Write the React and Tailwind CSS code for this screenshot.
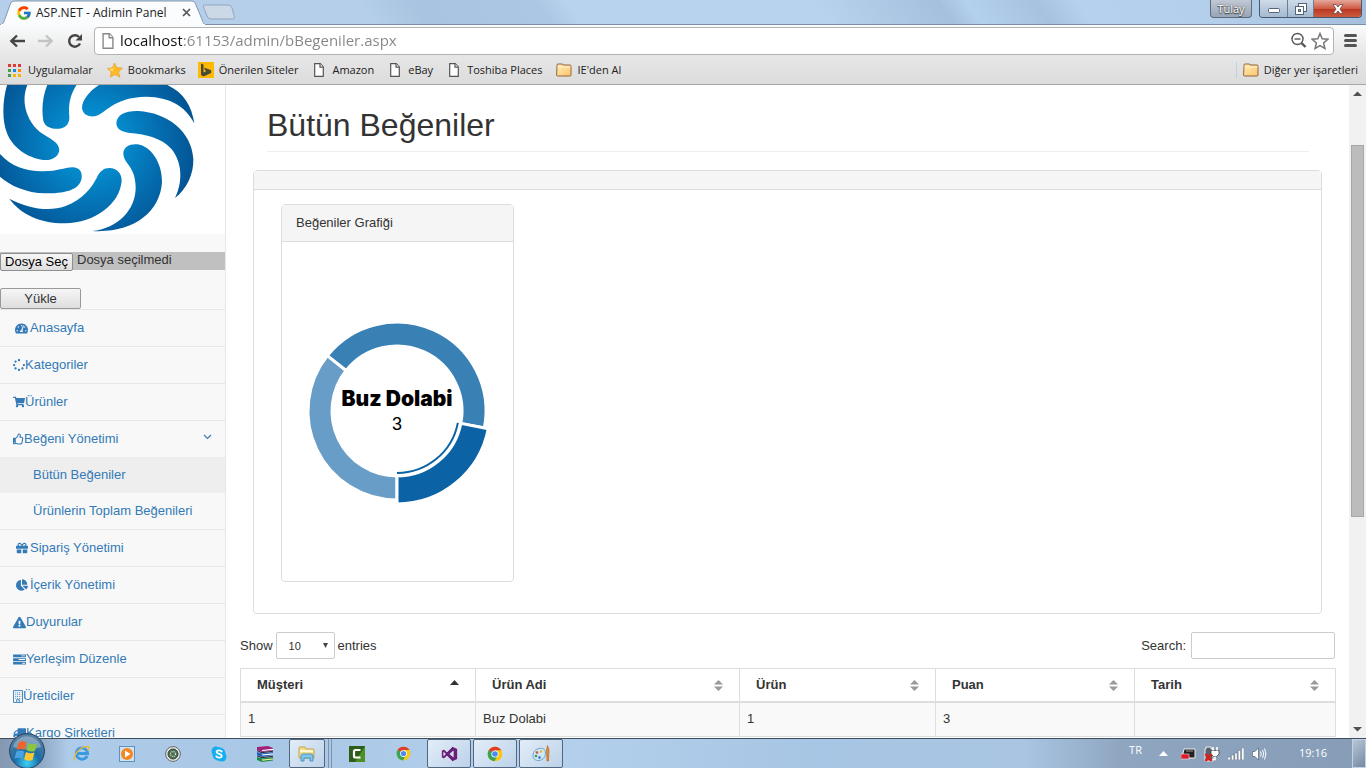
import React from "react";
import {
  FaTachometerAlt,
  FaSpinner,
  FaShoppingCart,
  FaRegThumbsUp,
  FaGift,
  FaChartPie,
  FaExclamationTriangle,
  FaTruck,
} from "react-icons/fa";
import { FcGoogle } from "react-icons/fc";

/* ---------- icons ---------- */

function PageIcon({ className }) {
  return (
    <svg viewBox="0 0 10 14" className={className} fill="#fff" stroke="currentColor" strokeWidth="1.2">
      <path d="M.7.7h5.6L9.3 4v9.3H.7z" />
      <path d="M6 .7V4.200h3.300" />
    </svg>
  );
}

function FolderIcon() {
  return (
    <svg viewBox="0 0 16 14" className="h-3.5 w-4">
      <defs>
        <linearGradient id="folder" x1="0" y1="0" x2="1" y2="1">
          <stop offset="0" stopColor="#ffecb8" />
          <stop offset="1" stopColor="#fbc56c" />
        </linearGradient>
      </defs>
      <path d="M1 3V2Q1 1 2 1h4q1 0 1 1h7q1 0 1 1v9q0 1-1 1H1.500Q.6 13 .6 12z" fill="url(#folder)" stroke="#93653a" />
      <path d="M1.500 4h13" stroke="#fff3d0" />
    </svg>
  );
}

function AppsIcon() {
  const colors = ["#e53935", "#e53935", "#e53935", "#43a047", "#1e88e5", "#fb8c00", "#43a047", "#fbb400", "#fbb400"];
  return (
    <svg viewBox="0 0 13 13" className="size-[13px]">
      {colors.map((c, i) => (
        <rect key={i} x={(i % 3) * 5} y={Math.floor(i / 3) * 5} width="3" height="3" fill={c} />
      ))}
    </svg>
  );
}

function StarIcon() {
  return (
    <svg viewBox="0 0 16 16" className="size-4">
      <path d="M7.500 1l2.200 4.600 5.800.4-4 4 1.500 5.300-5-2.700L3.300 15l.9-5.200L.4 6.500l5-.8z" fill="#fdb927" stroke="#e79a1b" strokeWidth=".6" />
      <path d="M7.500 2.500L6 6.500l-4 .6 3.500 2.400z" fill="#ffe37a" />
    </svg>
  );
}

function BingIcon() {
  return (
    <svg viewBox="0 0 16 16" className="size-4">
      <rect width="16" height="16" fill="#ffb900" />
      <path fillRule="evenodd" d="M3 1.500l2.500 1v8L8.500 9 7 8.300 6 5.500l7.200 2.700v2.900L5.500 14.500 3 13z" fill="#4a4a3c" />
    </svg>
  );
}

function ChromeIcon({ className }) {
  return (
    <svg viewBox="0 0 24 24" className={className}>
      <circle cx="12" cy="12" r="11" fill="#f9c80e" />
      <path d="M2.500 6.500A11 11 0 0 0 11 23l5-8.500-4-2.500z" fill="#3ba455" />
      <path d="M12 12L2.500 6.500A11 11 0 0 1 21.500 6.500H12z" fill="#dc3d2f" />
      <path d="M2.500 6.500L7.300 14.700 12 12z" fill="#3ba455" />
      <circle cx="12" cy="12" r="5.400" fill="#fff" />
      <circle cx="12" cy="12" r="4.200" fill="#4a8af4" />
    </svg>
  );
}

function TasksIcon() {
  return (
    <svg viewBox="0 0 14 12" className="h-[11px] w-[13px]" fill="currentColor">
      <path fillRule="evenodd" d="M0 .5h14v3H0zM9 1.500v1h4v-1zM0 4.500h14v3H0zM6 5.500v1h7v-1zM0 8.500h14v3H0zM10 9.500v1h3v-1z" />
    </svg>
  );
}

function BuildingIcon() {
  return (
    <svg viewBox="0 0 11 14" className="h-[13px] w-2.5" fill="none" stroke="currentColor">
      <path d="M.5.5h10v13h-10zM4 13v-2.500h3V13" />
      <path d="M2.500 3h6.500M2.500 5h6.500M2.500 7h6.500M2.500 9h6.500" strokeDasharray="1 1" />
    </svg>
  );
}

function SwirlLogo() {
  return (
    <svg viewBox="0 3 675 447" className="h-[149px] w-full bg-white" preserveAspectRatio="xMinYMin slice">
      <defs>
        <radialGradient id="swirl" gradientUnits="userSpaceOnUse" cx="275" cy="175" r="330">
          <stop offset="0" stopColor="#0a9ce0" />
          <stop offset=".3" stopColor="#0489cb" />
          <stop offset=".7" stopColor="#0467a9" />
          <stop offset="1" stopColor="#03508f" />
        </radialGradient>
      </defs>
      <g fill="url(#swirl)">
        <path d="M22 0C8 45 5 105 20 145C36 190 82 222 130 228C162 231 181 212 177 192C172 168 135 160 110 135C78 102 62 50 83 0z" />
        <path d="M143 0C128 35 124 75 130 110C135 130 158 136 178 134C198 132 209 118 208 98C204 60 212 28 232 0z" />
        <path d="M302 0C270 18 246 48 246 72C248 92 266 99 284 97C318 90 335 40 440 38C510 40 555 65 583 118C575 65 550 22 495 0z" />
        <path d="M349 118C350 92 376 80 415 81C500 86 575 140 580 225C581 272 560 315 525 342C546 300 550 240 515 196C485 160 430 150 390 147C365 144 350 136 349 118z" />
        <path d="M370 207C371 188 390 179 412 181C452 186 487 235 486 295C480 385 400 448 277 441C350 433 408 380 407 308C406 245 370 240 370 207z" />
        <path d="M28 344C80 372 145 385 195 367C250 346 275 310 290 282C299 261 312 252 328 252C352 253 365 268 365 290C360 360 285 416 195 418C125 419 62 392 28 344z" />
        <path d="M0 210C35 248 80 263 130 262C175 262 190 251 218 250C238 251 247 263 245 282C240 316 200 329 135 328C80 327 30 305 0 278z" />
      </g>
    </svg>
  );
}

/* ---------- browser frame ---------- */

function TabStrip() {
  return (
    <div className="relative flex h-[25px] items-stretch border-b border-[#7c8fa6] bg-[linear-gradient(55deg,#b5cfea_0%,#b5cfea_27%,#a9c4e0_31%,#abc7e3_40%,#b7d3ee_42%,#b7d3ee_60%,#a5c0dc_69%,#b3d0ec_71%,#a7c2de_76%,#b5d1ed_79%,#b3cfeb_88%,#a3bedb_100%)]">
      <div className="relative -mb-px flex w-[206px] items-center pl-4">
        <svg viewBox="0 0 206 25" className="absolute inset-0 size-full" preserveAspectRatio="none">
          <path d="M0 25C4 24 4 21 6 16L10 5C11 2 12 1 15 1H191C194 1 195 2 196 5L201 17C203 22 203 24 206 25z" fill="#fbfcfd" stroke="#8597ad" />
          <path d="M1 25h204" stroke="#fbfcfd" strokeWidth="2" />
        </svg>
        <FcGoogle className="relative size-4" />
        <span className="relative ml-1 flex-1 text-xs text-[#222]">ASP.NET - Adimin Panel</span>
        <button aria-label="Sekmeyi kapat" className="relative mr-[15px]">
          <svg viewBox="0 0 9 9" className="size-[9px]" stroke="#555" strokeWidth="1.700">
            <path d="M1 1l7 7M8 1L1 8" />
          </svg>
        </button>
      </div>
      <button aria-label="Yeni sekme" className="-ml-1 self-center">
        <svg viewBox="0 0 33 16" className="h-4 w-[33px]">
          <path d="M2 1h24q3 0 4 3l2.500 9q0 2-2 2H9q-3 0-4-3L1.500 3q0-2 .5-2z" fill="#cbd8e6" stroke="#93a6bd" />
        </svg>
      </button>
      <div className="ml-auto flex h-[18px] items-stretch pr-1">
        <button className="mr-[7px] w-[42px] rounded-b border border-t-0 border-[#5d6b7c] bg-[linear-gradient(#c0c9d4,#98a5b5)] text-[11px] leading-4 text-white [text-shadow:0_0_2px_#333,0_1px_1px_#333]">
          Tülay
        </button>
        <div className="flex overflow-hidden rounded-b border border-t-0 border-[#46586e]">
          <button aria-label="Küçült" className="flex w-7 items-center justify-center border-r border-[#6c7e95] bg-[linear-gradient(#cfdbe8,#a4b9d0)]">
            <svg viewBox="0 0 12 5" className="mt-1 h-[5px] w-3"><rect x=".5" y=".5" width="11" height="4" rx="1" fill="#fff" stroke="#53637a" /></svg>
          </button>
          <button aria-label="Geri yükle" className="flex w-[26px] items-center justify-center border-r border-[#6c7e95] bg-[linear-gradient(#cfdbe8,#a4b9d0)]">
            <svg viewBox="0 0 12 12" className="size-3" fill="#fff" stroke="#53637a"><rect x="3.500" y=".5" width="8" height="8" /><rect x=".5" y="3.500" width="8" height="8" /><rect x="3.500" y="6.500" width="2" height="2" fill="#9fb3c9" /></svg>
          </button>
          <button aria-label="Kapat" className="flex w-[47px] items-center justify-center bg-[linear-gradient(#e5a99c,#cf5a45_50%,#b93620_51%,#cc5a3e)]">
            <svg viewBox="0 0 12 10" className="h-2.5 w-3"><path d="M1 .5h3l2 2.500 2-2.500h3L8 5l3 4.500H8L6 7 4 9.500H1L4 5z" fill="#fff" stroke="#6b4a4a" strokeWidth=".8" /></svg>
          </button>
        </div>
      </div>
    </div>
  );
}

function Toolbar() {
  return (
    <div className="flex h-[31px] items-center bg-[linear-gradient(#fafbfc,#e6e6e6)] pr-[9px] pl-[9px]">
      <button aria-label="Geri" className="mr-[13px]">
        <svg viewBox="0 0 16 14" className="h-3.5 w-4" fill="none" stroke="#444" strokeWidth="2.400"><path d="M16 7H2.500M8 1.500L2.300 7 8 12.500" /></svg>
      </button>
      <button aria-label="İleri" className="mr-[13px]">
        <svg viewBox="0 0 16 14" className="h-3.5 w-4" fill="none" stroke="#c4c4c4" strokeWidth="2.400"><path d="M0 7h13.500M8 1.500L13.700 7 8 12.500" /></svg>
      </button>
      <button aria-label="Yenile" className="mr-[11px]">
        <svg viewBox="0 0 16 16" className="size-4"><path d="M13 10.500A5.700 5.700 0 1 1 12 4" fill="none" stroke="#444" strokeWidth="2.400" /><path d="M15 1v6.500H8.500z" fill="#444" /></svg>
      </button>
      <div className="flex h-7 flex-1 items-center rounded-sm border border-[#b3b3b3] bg-white pr-1 pl-[7px]">
        <PageIcon className="h-4 w-3 text-[#888]" />
        <input
          aria-label="Adres"
          readOnly
          value="localhost:61153/admin/bBegeniler.aspx"
          className="ml-[6px] min-w-0 flex-1 bg-[linear-gradient(90deg,#111_62px,#858585_62px)] bg-clip-text text-[15px] text-transparent outline-none"
        />
        <button aria-label="Yakınlaştırma" className="mr-1">
          <svg viewBox="0 0 17 17" className="size-[17px]" fill="none" stroke="#555"><circle cx="7.500" cy="7" r="5.500" strokeWidth="1.400" /><path d="M4.500 7h6" strokeWidth="1.400" /><path d="M11.500 11l4 4" strokeWidth="2.400" /></svg>
        </button>
        <button aria-label="Yer işareti ekle">
          <svg viewBox="0 0 18 18" className="size-[18px]" fill="#fff" stroke="#777" strokeWidth="1.500"><path d="M9 1.500l2.200 5.200 5.600.5-4.200 3.700 1.300 5.500L9 13.500l-4.900 2.900 1.300-5.500L1.200 7.200l5.600-.5z" /></svg>
        </button>
      </div>
      <button aria-label="Menü" className="ml-2.5">
        <svg viewBox="0 0 13 13" className="size-[13px]" stroke="#555" strokeWidth="3" strokeLinecap="round"><path d="M1.500 1.500h10M1.500 6.500h10M1.500 11.500h10" /></svg>
      </button>
    </div>
  );
}

function BookmarkBar() {
  const link = "flex items-center whitespace-nowrap text-[#222]";
  const page = "h-3.5 w-2.5 text-[#555]";
  return (
    <nav className="flex h-[29px] items-center border-b border-[#a6a6a6] bg-[linear-gradient(#e6e6e6,#dcdcdc)] pr-2 pl-2 text-[11px]">
      <a href="#apps" className={`${link} mr-3.5 gap-[7px]`}><AppsIcon />Uygulamalar</a>
      <a href="#bookmarks" className={`${link} mr-3 gap-[5px]`}><StarIcon />Bookmarks</a>
      <a href="#onerilen" className={`${link} mr-4 gap-[5px]`}><BingIcon />Önerilen Siteler</a>
      <a href="#amazon" className={`${link} mr-4 gap-2`}><PageIcon className={page} />Amazon</a>
      <a href="#ebay" className={`${link} mr-4 gap-2`}><PageIcon className={page} />eBay</a>
      <a href="#toshiba" className={`${link} mr-3.5 gap-2`}><PageIcon className={page} />Toshiba Places</a>
      <a href="#ie" className={`${link} gap-[5px]`}><FolderIcon />IE'den Al</a>
      <a href="#other" className={`${link} ml-auto gap-[5px] border-l border-[#c3d0dc] pl-1.5`}><FolderIcon />Diğer yer işaretleri</a>
    </nav>
  );
}

function Scrollbar() {
  return (
    <div className="flex w-[17px] shrink-0 flex-col items-center bg-[#f1f1f1]">
      <svg viewBox="0 0 17 17" className="size-[17px]"><path d="M4 11l4.500-4.500L13 11z" fill="#505050" /></svg>
      <div className="relative w-full flex-1">
        <div className="absolute inset-x-0.5 top-[7%] h-[60%] border border-[#a8a8a8] bg-[#bcbcbc]" />
      </div>
      <svg viewBox="0 0 17 17" className="size-[17px]"><path d="M4 6l4.500 4.500L13 6z" fill="#505050" /></svg>
    </div>
  );
}

/* ---------- page ---------- */

const wide = "flex w-[17px] justify-center";

function MenuItem({ icon, children, arrow }) {
  return (
    <a href="#menu" className="flex h-9 items-center px-[13px]">
      {icon}
      {children}
      {arrow && (
        <svg viewBox="0 0 9 6" className="mb-1 ml-auto h-1.5 w-[9px]" fill="none" stroke="currentColor" strokeWidth="1.200">
          <path d="M1 1l3.500 3.500L8 1" />
        </svg>
      )}
    </a>
  );
}

function Sidebar() {
  return (
    <aside className="w-[226px] shrink-0 overflow-hidden border-r border-[#e7e7e7] bg-[#f8f8f8]">
      <SwirlLogo />
      <label className="mt-[18px] flex h-[18px] items-start bg-[#c0c0c0] leading-4">
        <input type="file" className="sr-only" />
        <span className="mt-px flex h-[18px] w-[73px] shrink-0 items-center justify-center rounded-xs border border-[#8f8f8f] bg-[linear-gradient(#f6f6f6,#dedede)] text-black">
          Dosya Seç
        </span>
        <span className="ml-1">Dosya seçilmedi</span>
      </label>
      <button className="mt-[18px] flex h-[21px] w-[81px] items-center justify-center rounded-xs border border-[#999] bg-[linear-gradient(#f6f6f6,#dedede)]">
        Yükle
      </button>
      <ul className="border-t border-[#e7e7e7] text-[#337ab7] [&>li]:border-b [&>li]:border-[#e7e7e7]">
        <li><MenuItem icon={<span className={wide}><FaTachometerAlt className="size-[13px]" /></span>}>Anasayfa</MenuItem></li>
        <li><MenuItem icon={<FaSpinner className="size-3" />}>Kategoriler</MenuItem></li>
        <li><MenuItem icon={<FaShoppingCart className="size-3" />}>Ürünler</MenuItem></li>
        <li>
          <MenuItem icon={<FaRegThumbsUp className="h-3 w-[11px]" />} arrow>Beğeni Yönetimi</MenuItem>
          <ul>
            <li><a href="#butun" className="flex h-9 items-center bg-[#eee] pl-[33px]">Bütün Beğeniler</a></li>
            <li><a href="#toplam" className="flex h-9 items-center pl-[33px]">Ürünlerin Toplam Beğenileri</a></li>
          </ul>
        </li>
        <li><MenuItem icon={<span className={wide}><FaGift className="size-3" /></span>}>Sipariş Yönetimi</MenuItem></li>
        <li><MenuItem icon={<span className={wide}><FaChartPie className="size-3" /></span>}>İçerik Yönetimi</MenuItem></li>
        <li><MenuItem icon={<FaExclamationTriangle className="size-[13px]" />}>Duyurular</MenuItem></li>
        <li><MenuItem icon={<TasksIcon />}>Yerleşim Düzenle</MenuItem></li>
        <li><MenuItem icon={<BuildingIcon />}>Üreticiler</MenuItem></li>
        <li><MenuItem icon={<FaTruck className="size-[13px] -scale-x-100" />}>Kargo Şirketleri</MenuItem></li>
      </ul>
    </aside>
  );
}

function point(radius, degrees) {
  const a = (degrees * Math.PI) / 180;
  return `${(radius * Math.sin(a)).toFixed(2)} ${(-radius * Math.cos(a)).toFixed(2)}`;
}

function slice(inner, outer, from, to) {
  return `M${point(outer, from)}A${outer} ${outer} 0 0 1 ${point(outer, to)}L${point(inner, to)}A${inner} ${inner} 0 0 0 ${point(inner, from)}z`;
}

function Donut() {
  return (
    <svg viewBox="-115 -169 231 339" className="h-[339px] w-full">
      <g stroke="#fff" strokeWidth="3">
        <path d={slice(65, 89, 180, 308.500)} fill="#679dc6" />
        <path d={slice(65, 89, 308.500, 461)} fill="#3980b5" />
        <path d={slice(65, 93, 101, 180)} fill="#0b62a4" />
      </g>
      <path d={`M${point(62, 101)}A62 62 0 0 1 0 62`} fill="none" stroke="#0b62a4" strokeWidth="2" />
      <text y="-5" textAnchor="middle" className="font-[Inter,sans-serif] text-[21px] font-black">Buz Dolabi</text>
      <text y="19" textAnchor="middle" className="text-lg">3</text>
    </svg>
  );
}

function SortIcon({ sorted }) {
  return (
    <svg viewBox="0 0 9 11" className="h-[11px] w-[9px] shrink-0">
      {sorted ? (
        <path d="M0 5l4.500-5L9 5z" fill="#333" />
      ) : (
        <path d="M0 4.500L4.500 0 9 4.500zM0 6.500h9L4.500 11z" fill="#999" />
      )}
    </svg>
  );
}

function Content() {
  const columns = [
    ["Müşteri", "w-[235px]"],
    ["Ürün Adi", "w-[264px]"],
    ["Ürün", "w-[196px]"],
    ["Puan", "w-[199px]"],
    ["Tarih", ""],
  ];
  return (
    <main className="min-w-0 flex-1 overflow-hidden bg-white pr-[13px] pl-[14px]">
      <h1 className="mx-[27px] mt-[22px] border-b border-[#eee] pb-2 text-[32px] leading-9 font-normal">Bütün Beğeniler</h1>
      <section className="mt-[18px] mr-[14px] ml-[13px] rounded border border-[#ddd]">
        <div className="h-[19px] border-b border-[#ddd] bg-[#f5f5f5]" />
        <div className="px-[27px] pt-3.5 pb-[31px]">
          <div className="w-[233px] rounded border border-[#ddd]">
            <h2 className="flex h-[37px] items-center border-b border-[#ddd] bg-[#f5f5f5] px-3.5 font-normal">Beğeniler Grafiği</h2>
            <Donut />
          </div>
        </div>
      </section>
      <div className="mt-[18px] flex items-center justify-between pr-px">
        <label className="flex items-center gap-[3px]">
          Show
          <span className="relative">
            <select className="h-[27px] w-[59px] appearance-none rounded-xs border border-[#ccc] bg-white pl-3 text-[11px] outline-none">
              <option>10</option>
              <option>25</option>
            </select>
            <svg viewBox="0 0 5 5" className="pointer-events-none absolute top-[11px] right-[7px] size-[5px]"><path d="M0 0h5L2.500 5z" fill="#444" /></svg>
          </span>
          entries
        </label>
        <label className="flex items-center gap-[5px]">
          Search:
          <input type="search" className="h-[27px] w-36 rounded-xs border border-[#ccc] bg-white px-2 outline-none" />
        </label>
      </div>
      <table className="mt-[9px] w-full table-fixed border-separate border-spacing-0 border-t border-l border-[#ddd]">
        <thead>
          <tr>
            {columns.map(([name, width], i) => (
              <th key={name} className={`${width} h-[34px] border-r border-b-2 border-[#ddd] px-4 text-left font-bold`}>
                <div className="flex items-center justify-between">
                  {name}
                  <SortIcon sorted={i === 0} />
                </div>
              </th>
            ))}
          </tr>
        </thead>
        <tbody>
          <tr className="bg-[#f9f9f9]">
            {["1", "Buz Dolabi", "1", "3", ""].map((v, i) => (
              <td key={i} className="h-[34px] border-r border-b border-[#ddd] px-[7px] pt-[7px] align-top">{v}</td>
            ))}
          </tr>
        </tbody>
      </table>
    </main>
  );
}

/* ---------- taskbar ---------- */

function StartOrb() {
  return (
    <svg viewBox="0 0 36 36" className="size-9">
      <defs>
        <radialGradient id="orb" cx=".5" cy=".85" r=".8">
          <stop offset="0" stopColor="#3fd0f5" />
          <stop offset=".45" stopColor="#1b6da8" />
          <stop offset="1" stopColor="#5c7f9f" />
        </radialGradient>
      </defs>
      <circle cx="18" cy="18" r="17.400" fill="url(#orb)" stroke="#21425f" />
      <path d="M4 14A14.500 14.500 0 0 1 32 14Q18 19 4 14z" fill="#fff" opacity=".3" />
      <path d="M9.500 9.500q4-2.500 8 0l-1.800 7.500q-4-2-8 0z" fill="#f0652b" />
      <path d="M19 10q4 2.300 9 .5l-2 7.500q-4.500 1.500-8.500-.8z" fill="#8cc63e" />
      <path d="M7.300 18.500q4-2 8 0l-1.900 7.300q-4-2-8 0z" fill="#4aa3e0" />
      <path d="M17 19q4 2.300 8.500.6l-2 7.400q-4.500 1.800-8.300-.7z" fill="#fdc82f" />
    </svg>
  );
}

function IeIcon() {
  return (
    <svg viewBox="0 0 18 18" className="size-[17px]" fill="none">
      <path d="M15 11.500A6 6 0 1 1 15.500 9H5" stroke="#3a9ae0" strokeWidth="3" />
      <path d="M2 16.500C-1 13 6 2 15 1.500c3 .3 1.500 3 .5 4.500" stroke="#f2b92c" strokeWidth="1.500" />
    </svg>
  );
}

function PlayerIcon() {
  return (
    <svg viewBox="0 0 16 16" className="size-4">
      <rect x=".5" y=".5" width="15" height="15" fill="#cfe3f5" stroke="#5b93c2" />
      <circle cx="8" cy="8" r="6" fill="#f6861f" />
      <path d="M6 4.500L11.500 8 6 11.500z" fill="#fff" />
    </svg>
  );
}

function KnobIcon() {
  return (
    <svg viewBox="0 0 16 16" className="size-4">
      <circle cx="8" cy="8" r="7.400" fill="#e4e8e4" stroke="#666" />
      <circle cx="8" cy="8" r="5" fill="#4d7054" stroke="#34463a" />
      <circle cx="8" cy="8" r="2.500" fill="none" stroke="#dcebdc" strokeWidth="1.200" strokeDasharray="1 1" />
    </svg>
  );
}

function SkypeIcon() {
  return (
    <svg viewBox="0 0 16 16" className="size-4">
      <circle cx="5" cy="5" r="4.500" fill="#14aef0" />
      <circle cx="11" cy="11" r="4.500" fill="#14aef0" />
      <circle cx="8" cy="8" r="6.700" fill="#14aef0" />
      <path d="M10.800 5.600C10 4 5.500 3.800 5.500 6c0 2.300 5.300 1.500 5.300 4 0 2.200-4.700 2.200-5.600.2" fill="none" stroke="#fff" strokeWidth="1.700" strokeLinecap="round" />
    </svg>
  );
}

function RarIcon() {
  return (
    <svg viewBox="0 0 16 16" className="size-4">
      <path d="M0 1l11-1 5 2v2.500L5 6 0 4z" fill="#a0207a" />
      <path d="M5 4.500l11-1.200" stroke="#fff" strokeWidth="1.200" />
      <path d="M0 6l5 1.500 11-1.500v3L5 11 0 9z" fill="#2460b4" />
      <path d="M5 9l11-1.200" stroke="#fff" strokeWidth="1.200" />
      <path d="M0 11l5 1.500L16 11v3.500L5 16l-5-2z" fill="#1d8a44" />
      <path d="M5 14.200L16 13" stroke="#f4ef9a" strokeWidth="1.200" />
      <path d="M0 4.700l5 2L16 5.200M0 9.800l5 1.900 11-1.500" fill="none" stroke="#1c1020" strokeWidth=".9" />
    </svg>
  );
}

function ExplorerIcon() {
  return (
    <svg viewBox="0 0 18 16" className="h-4 w-[18px]">
      <path d="M1 2q0-1 1-1h5l1 2h7q1 0 1 1v8H1z" fill="#f3dc8b" stroke="#c6a24b" />
      <path d="M2 5h13" stroke="#fff7cf" strokeWidth="2" />
      <path d="M3 15V10q0-2 2-2h8q2 0 2 2v5h-3v-3H6v3z" fill="#7fc4ea" stroke="#4a93c4" />
    </svg>
  );
}

function CamtasiaIcon() {
  return (
    <svg viewBox="0 0 16 16" className="size-4">
      <path d="M0 0h16v16H0z" fill="#2c5e1a" />
      <path d="M16 0v16H6z" fill="#4c8f22" />
      <path d="M11.500 4H6.500q-1.500 0-1.500 1.500v4.500q0 1.500 1.500 1.500h5" fill="none" stroke="#fff" strokeWidth="2.200" />
    </svg>
  );
}

function StudioIcon() {
  return (
    <svg viewBox="0 0 17 16" className="h-4 w-[17px]">
      <path
        fillRule="evenodd"
        fill="#68217a"
        stroke="#fff"
        strokeWidth=".5"
        d="M.5 4.500L3 3.300 6 6 11.500.5 16.500 2.700V13.300L11.500 15.500 6 10 3 12.700.5 11.500zM2.700 6.300V9.700L4.500 8zM12.300 5L8.800 8l3.500 3z"
      />
    </svg>
  );
}

function PaintIcon() {
  return (
    <svg viewBox="0 0 18 17" className="h-[17px] w-[18px]">
      <path d="M7 3.500c4-1 6.500 1 6.500 4.500 0 5-4 8-8 7.500C2 15 .5 12.500 1 9.500 1.500 6.500 4 4 7 3.500z" fill="#cfe6f5" stroke="#6ca3c9" />
      <circle cx="5" cy="7.500" r="1.300" fill="#d94a3c" />
      <circle cx="9" cy="6.500" r="1.300" fill="#f2b92c" />
      <circle cx="4" cy="11" r="1.300" fill="#3f9b46" />
      <circle cx="7.500" cy="12.500" r="1.300" fill="#356fc4" />
      <path d="M14.500 5l1-4.500L17 5l-.5 11h-1.500z" fill="#ea8a2e" stroke="#a9601c" strokeWidth=".6" />
    </svg>
  );
}

function Taskbar() {
  const plain = "flex w-[46px] items-center justify-center";
  const open = "flex w-11 items-center justify-center rounded-xs border border-[#51677f] bg-[linear-gradient(135deg,#e3edf8,#bcd2e9)]";
  return (
    <footer className="relative flex h-[30px] shrink-0 items-stretch border-t border-[#3d4f5e] bg-[linear-gradient(90deg,#8498b2_0%,#8fa8c4_3%,#aecbe9_5%,#a9c7e6_20%,#b4d0ec_40%,#a7c5e4_60%,#a9c5e2_75%,#8fa6c0_82%,#879db7_100%)]">
      <button aria-label="Başlat" className="absolute bottom-[-1px] left-[9px]"><StartOrb /></button>
      <div className="ml-[58px] flex items-stretch">
        <button aria-label="Internet Explorer" className={plain}><IeIcon /></button>
        <button aria-label="Media Player" className={plain}><PlayerIcon /></button>
        <button aria-label="Ses" className={plain}><KnobIcon /></button>
        <button aria-label="Skype" className={plain}><SkypeIcon /></button>
        <button aria-label="WinRAR" className={plain}><RarIcon /></button>
        <button aria-label="Windows Gezgini" className="ml-px flex w-9 items-center justify-center rounded-xs border border-[#51677f] bg-[linear-gradient(135deg,#e3edf8,#bcd2e9)]"><ExplorerIcon /></button>
        <span className="w-1 border-r border-[#7d93ac]" />
        <span className="mr-0.5 w-[3px] border-r border-[#7d93ac]" />
        <button aria-label="Camtasia" className={plain}><CamtasiaIcon /></button>
        <button aria-label="Chrome" className={plain}><ChromeIcon className="size-[15px]" /></button>
        <div className="flex items-stretch gap-0.5 pl-px">
          <button aria-label="Visual Studio" className={open}><StudioIcon /></button>
          <button aria-label="Chrome penceresi" className={open}><ChromeIcon className="size-4" /></button>
          <button aria-label="Paint" className={open}><PaintIcon /></button>
        </div>
      </div>
      <div className="ml-auto flex items-center text-[11px] text-white">
        <span className="mr-[17px] mb-1.5">TR</span>
        <svg viewBox="0 0 9 5" className="mr-[13px] h-[5px] w-[9px]"><path d="M0 5l4.500-5L9 5z" fill="#fff" /></svg>
        <svg viewBox="0 0 15 12" className="mr-2 h-3 w-[15px]"><path d="M3 1h11v9H1z" fill="#222" stroke="#eee" /><path d="M5 3h7" stroke="#999" /><rect y="6" width="8" height="5" fill="#e0192b" stroke="#fff" strokeWidth=".5" /></svg>
        <svg viewBox="0 0 16 16" className="mr-2 size-4">
          <path d="M2 3V1h5v2h2v12H1V3z" fill="#56616e" stroke="#eee" />
          <path d="M7 4.500h8V8l-2.500 2.500h-3L7 8z" fill="#fff" stroke="#333" strokeWidth=".7" />
          <path d="M9 1v3.500M13 1v3.500M11 10.500v3H8.500" fill="none" stroke="#fff" strokeWidth="1.600" />
          <path d="M1.500 8l6 7M7.500 8l-6 7" stroke="#e21b1b" strokeWidth="2.400" />
        </svg>
        <svg viewBox="0 0 16 12" className="mr-2 h-3 w-4" fill="#fff" stroke="#44566b" strokeWidth=".4"><path d="M0 9h2.400v3H0zM3.400 7h2.400v5H3.400zM6.800 5h2.400v7H6.800zM10.200 2.500h2.400V12h-2.400zM13.600 0H16v12h-2.400z" /></svg>
        <svg viewBox="0 0 15 14" className="mr-8 h-3.5 w-[15px]" fill="none" stroke="#fff"><path d="M.5 4.500H3L6.500 1v12L3 9.500H.5z" fill="#fff" stroke="#44566b" strokeWidth=".6" /><path d="M8.500 4.500q1.500 2.500 0 5M10.500 3q2.500 4 0 8M12.500 1.500q3 5.500 0 11" /></svg>
        <time className="mr-[25px]">19:16</time>
        <button aria-label="Masaüstünü göster" className="h-full w-3.5 border border-[#c5d1de] bg-[linear-gradient(135deg,#b8c7d8,#7289a3)]" />
      </div>
    </footer>
  );
}

export default function App() {
  return (
    <div className="flex h-screen flex-col overflow-hidden font-['Open_Sans','Noto_Sans',sans-serif]">
      <header className="shrink-0">
        <TabStrip />
        <Toolbar />
        <BookmarkBar />
      </header>
      <div className="flex min-h-0 flex-1 font-['Liberation_Sans',Arial,sans-serif] text-[13px] leading-[18px] text-[#333]">
        <Sidebar />
        <Content />
        <Scrollbar />
      </div>
      <Taskbar />
    </div>
  );
}
